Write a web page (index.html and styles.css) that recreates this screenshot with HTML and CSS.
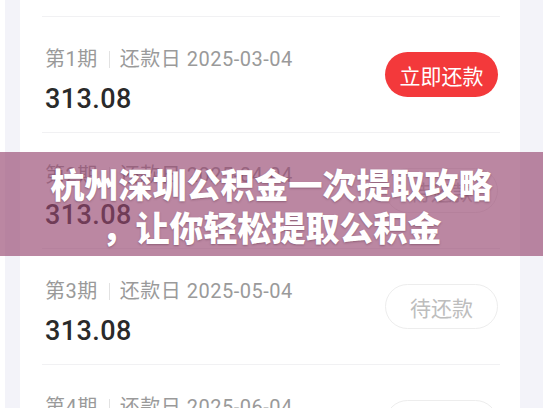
FILE: index.html
```html
<html><head>
<title>还款计划</title>
<link rel="stylesheet" href="styles.css">
</head><body>

<div class="page">
<div class="card">

<div class="row">
  <div class="info">
    <div class="label">第0期<span class="sep"></span>还款日 2025-02-04</div>
    <div class="amount">313.08</div>
  </div>
  <div class="btn btn-done">已还款</div>
</div>

<div class="row">
  <div class="info">
    <div class="label">第1期<span class="sep"></span>还款日 2025-03-04</div>
    <div class="amount">313.08</div>
  </div>
  <div class="btn btn-pay">立即还款</div>
</div>

<div class="row">
  <div class="info">
    <div class="label">第2期<span class="sep"></span>还款日 2025-04-04</div>
    <div class="amount">313.08</div>
  </div>
  <div class="btn btn-wait">待还款</div>
</div>

<div class="row">
  <div class="info">
    <div class="label">第3期<span class="sep"></span>还款日 2025-05-04</div>
    <div class="amount">313.08</div>
  </div>
  <div class="btn btn-wait">待还款</div>
</div>

<div class="row">
  <div class="info">
    <div class="label">第4期<span class="sep"></span>还款日 2025-06-04</div>
    <div class="amount">313.08</div>
  </div>
  <div class="btn btn-wait">待还款</div>
</div>

</div>
</div>

<div class="banner">
  <div class="banner-text">杭州深圳公积金一次提取攻略<br/>，让你轻松提取公积金</div>
</div>

</body></html>
```

FILE: styles.css
```css
body {
  margin:0;
  background-color:#ffffff;
  font-family:Roboto, "Noto Sans CJK SC", sans-serif;
  overflow:hidden;
  height:408px;
}
.page {
  display:flow-root;
  margin-left:5px;
  padding-left:15px;
  padding-right:23px;
  background-color:#f3f3f9;
  height:408px;
  overflow:hidden;
}
.card {
  background-color:#ffffff;
  margin-top:-99px;
}
.row {
  display:flex;
  justify-content:space-between;
  align-items:flex-start;
  height:115px;
  margin-left:22px;
  margin-right:20px;
  padding-left:3px;
  border-bottom:1px solid #f1f1f3;
}
.info {
  padding-top:28px;
}
.label {
  font-size:20px;
  line-height:28px;
  color:#9a9a9a;
  display:flex;
  align-items:center;
  letter-spacing:0.5px;
}
.sep {
  display:inline-block;
  width:1px;
  height:17px;
  background-color:#e2e2e2;
  margin-left:11px;
  margin-right:10px;
}
.amount {
  font-size:27px;
  line-height:34px;
  font-weight:500;
  color:#2a2a2a;
  margin-top:9px;
  letter-spacing:0.4px;
}
.btn {
  width:113px;
  height:45px;
  margin-top:35px;
  margin-right:2px;
  border-radius:23px;
  box-sizing:border-box;
  display:flex;
  align-items:center;
  justify-content:center;
  font-family:"Noto Sans CJK SC", sans-serif;
  font-size:21px;
}
.btn-pay {
  background-color:#f3393b;
  color:#ffffff;
}
.btn-wait, .btn-done {
  border:1px solid #ededed;
  color:#bdbdbd;
}
.banner {
  position:absolute;
  left:0;
  top:152px;
  width:543px;
  height:104px;
  background-color:rgba(150,70,112,0.65);
  display:flex;
  align-items:center;
  justify-content:center;
}
.banner-text {
  font-family:"Noto Sans CJK SC", sans-serif;
  font-weight:900;
  font-size:34px;
  line-height:43px;
  color:#ffffff;
  text-align:center;
  padding-top:2px;
  text-shadow:0 1px 2px rgba(60,20,40,0.35);
}
```
